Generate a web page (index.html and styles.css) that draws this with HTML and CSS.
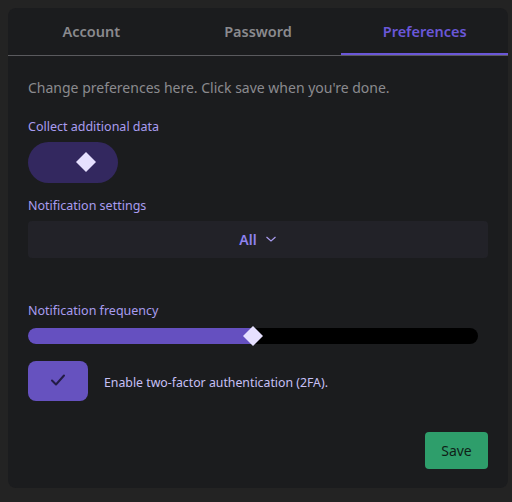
FILE: index.html
```html
<!DOCTYPE html>
<html>
<head>
<meta charset="utf-8">
<link rel="stylesheet" href="styles.css">
</head>
<body>
<div class="card">
  <div class="tabs">
    <div class="tab">Account</div>
    <div class="tab">Password</div>
    <div class="tab active">Preferences</div>
  </div>
  <div class="content">
    <p class="desc">Change preferences here. Click save when you're done.</p>
    <div class="label l1">Collect additional data</div>
    <div class="switch"><span class="knob"></span></div>
    <div class="label l2">Notification settings</div>
    <div class="select"><span>All</span>
      <svg width="12" height="8" viewBox="0 0 12 8"><path d="M1.5 2 L6 6 L10.5 2" fill="none" stroke="#a99cf0" stroke-width="1.2"/></svg>
    </div>
    <div class="label l3">Notification frequency</div>
    <div class="slider"><div class="fill" style="width:50%"></div><span class="thumb"></span></div>
    <div class="check-row">
      <div class="checkbox">
        <svg width="16" height="14" viewBox="0 0 16 14"><path d="M2 7.5 L6 11.5 L14 2.5" fill="none" stroke="#231c45" stroke-width="2" stroke-linecap="round" stroke-linejoin="round"/></svg>
      </div>
      <span class="check-label">Enable two-factor authentication (2FA).</span>
    </div>
    <div class="actions"><button class="save">Save</button></div>
  </div>
</div>
</body>
</html>
```
FILE: styles.css
```css
html, body { margin: 0; padding: 0; }
body {
  background: #232323;
  width: 512px;
  height: 502px;
  padding: 8px;
  box-sizing: border-box;
  font-family: "Noto Sans", "Open Sans", sans-serif;
}
.card {
  width: 500px;
  height: 480px;
  background: #1b1c1e;
  border-radius: 8px;
  box-sizing: border-box;
}
.tabs {
  display: flex;
  height: 47px;
  border-bottom: 1px solid #5a5a5e;
}
.tab {
  flex: 1;
  display: flex;
  align-items: center;
  justify-content: center;
  font-size: 14.5px;
  font-weight: 600;
  color: #8a8a8e;
  padding-bottom: 1px;
  box-sizing: border-box;
}
.tab.active {
  color: #6a57d8;
  box-shadow: inset 0 -2px 0 #6a57d8, inset 0 -3px 0 #1b1c1e;
}
.content {
  padding: 0 20px;
}
.desc {
  margin: 22px 0 0;
  font-size: 14px;
  line-height: 20px;
  color: #8b8b8f;
}
.label {
  font-size: 12.5px;
  line-height: 18px;
  color: #a99cf0;
}
.l1 { margin-top: 20px; }
.switch {
  margin-top: 6px;
  width: 90px;
  height: 41px;
  border-radius: 21px;
  background: #33285f;
  position: relative;
}
.knob {
  position: absolute;
  left: 48px;
  top: 10px;
  width: 20px;
  height: 20px;
  background: #e6e0ff;
  clip-path: polygon(50% 0, 100% 50%, 50% 100%, 0 50%);
}
.l2 { margin-top: 14px; }
.select {
  margin-top: 6px;
  height: 37px;
  background: #222228;
  border-radius: 4px;
  display: flex;
  align-items: center;
  justify-content: center;
  gap: 8px;
  font-size: 14px;
  font-weight: 600;
  color: #8f82f0;
}
.select svg { margin-top: -2px; }
.l3 { margin-top: 44px; }
.slider {
  margin-top: 8px;
  width: 450px;
  height: 16px;
  border-radius: 8px;
  background: #000;
  position: relative;
}
.fill {
  height: 100%;
  background: #6550c0;
  border-radius: 8px 0 0 8px;
}
.thumb {
  position: absolute;
  left: 215px;
  top: -2px;
  width: 20px;
  height: 20px;
  background: #e6e0ff;
  clip-path: polygon(50% 0, 100% 50%, 50% 100%, 0 50%);
}
.check-row {
  margin-top: 17px;
  display: flex;
  align-items: center;
  gap: 16px;
}
.checkbox {
  width: 60px;
  height: 40px;
  border-radius: 8px;
  background: #6652bf;
  display: flex;
  align-items: center;
  justify-content: center;
}
.checkbox svg { margin-top: -3px; }
.check-label {
  font-size: 12.3px;
  color: #c7c0f7;
  margin-top: 2px;
}
.actions {
  display: flex;
  justify-content: flex-end;
  margin-top: 31px;
}
.save {
  width: 63px;
  height: 37px;
  border: none;
  border-radius: 4px;
  background: #2e9e6b;
  color: #0f1f17;
  font-family: "Noto Sans", "Open Sans", sans-serif;
  font-size: 14px;
  padding: 0;
}
```
